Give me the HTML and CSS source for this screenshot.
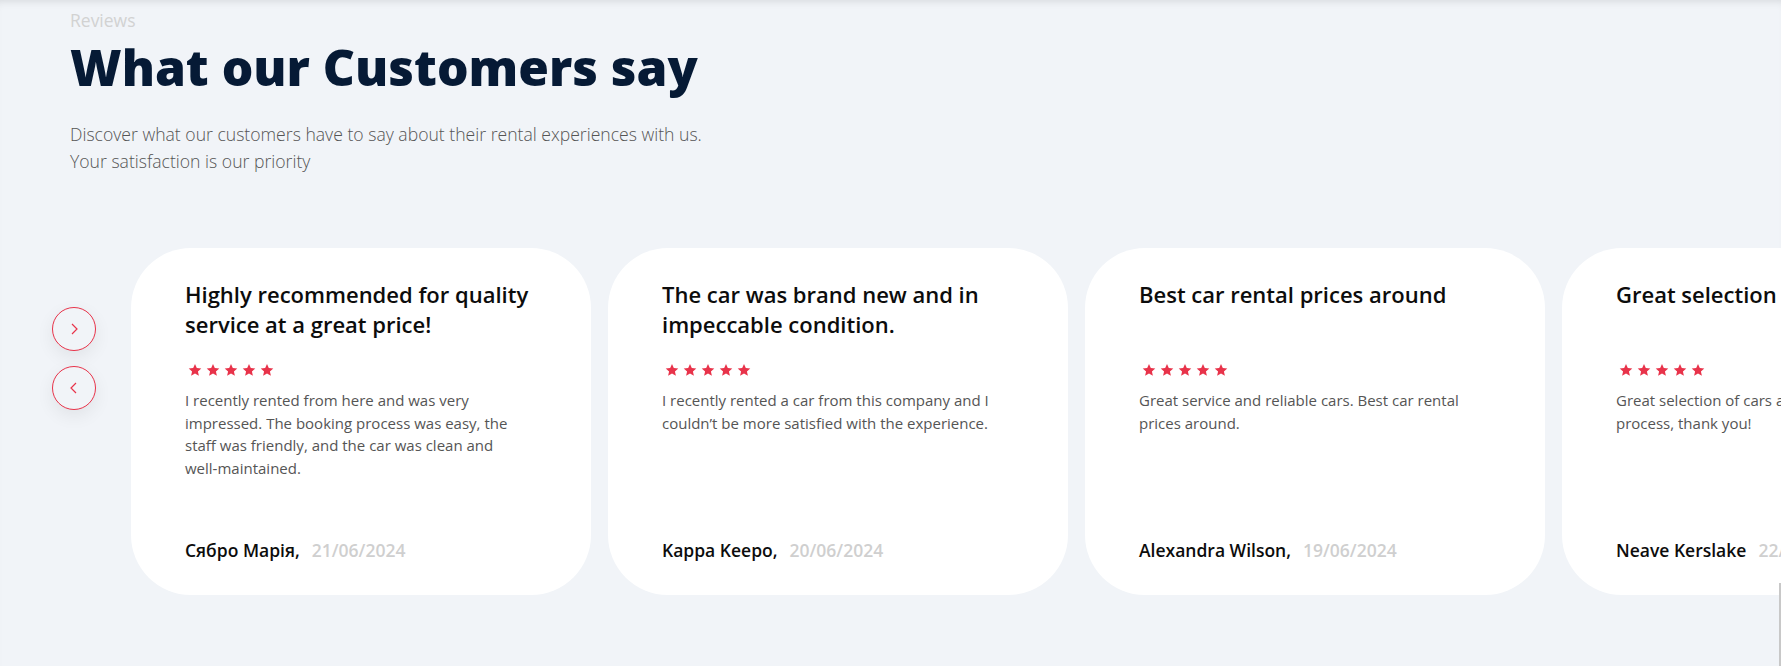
FILE: index.html
```html
<!DOCTYPE html>
<html lang="en">
<head>
<meta charset="utf-8">
<title>Reviews</title>
<link rel="stylesheet" href="styles.css">
</head>
<body>
<main class="page">
  <header class="intro">
    <div class="eyebrow">Reviews</div>
    <h1 class="title">What our Customers say</h1>
    <p class="lead">Discover what our customers have to say about their rental experiences with us.<br>Your satisfaction is our priority</p>
  </header>

  <section class="carousel">
    <div class="nav">
      <button class="nav-btn" aria-label="Next">
        <svg width="12" height="16" viewBox="0 0 12 16"><path d="M4 3 L9 8 L4 13" fill="none" stroke="#e8334a" stroke-width="1.2"/></svg>
      </button>
      <button class="nav-btn" aria-label="Previous">
        <svg width="12" height="16" viewBox="0 0 12 16"><path d="M8 3 L3 8 L8 13" fill="none" stroke="#e8334a" stroke-width="1.2"/></svg>
      </button>
    </div>

    <div class="track">
      <article class="card">
        <h3 class="card-title">Highly recommended for quality service at a great price!</h3>
        <div class="stars">
          <svg viewBox="0 0 24 24"><path d="M12 1.5l3.1 7.1 7.7.7-5.8 5.1 1.7 7.6L12 18l-6.7 4 1.7-7.6L1.2 9.3l7.7-.7z"/></svg>
          <svg viewBox="0 0 24 24"><path d="M12 1.5l3.1 7.1 7.7.7-5.8 5.1 1.7 7.6L12 18l-6.7 4 1.7-7.6L1.2 9.3l7.7-.7z"/></svg>
          <svg viewBox="0 0 24 24"><path d="M12 1.5l3.1 7.1 7.7.7-5.8 5.1 1.7 7.6L12 18l-6.7 4 1.7-7.6L1.2 9.3l7.7-.7z"/></svg>
          <svg viewBox="0 0 24 24"><path d="M12 1.5l3.1 7.1 7.7.7-5.8 5.1 1.7 7.6L12 18l-6.7 4 1.7-7.6L1.2 9.3l7.7-.7z"/></svg>
          <svg viewBox="0 0 24 24"><path d="M12 1.5l3.1 7.1 7.7.7-5.8 5.1 1.7 7.6L12 18l-6.7 4 1.7-7.6L1.2 9.3l7.7-.7z"/></svg>
        </div>
        <p class="card-text">I recently rented from here and was very impressed. The booking process was easy, the staff was friendly, and the car was clean and well&#8209;maintained.</p>
        <div class="author"><span class="name">Сябро Марія,</span><span class="date">21/06/2024</span></div>
      </article>

      <article class="card">
        <h3 class="card-title">The car was brand new and in impeccable condition.</h3>
        <div class="stars">
          <svg viewBox="0 0 24 24"><path d="M12 1.5l3.1 7.1 7.7.7-5.8 5.1 1.7 7.6L12 18l-6.7 4 1.7-7.6L1.2 9.3l7.7-.7z"/></svg>
          <svg viewBox="0 0 24 24"><path d="M12 1.5l3.1 7.1 7.7.7-5.8 5.1 1.7 7.6L12 18l-6.7 4 1.7-7.6L1.2 9.3l7.7-.7z"/></svg>
          <svg viewBox="0 0 24 24"><path d="M12 1.5l3.1 7.1 7.7.7-5.8 5.1 1.7 7.6L12 18l-6.7 4 1.7-7.6L1.2 9.3l7.7-.7z"/></svg>
          <svg viewBox="0 0 24 24"><path d="M12 1.5l3.1 7.1 7.7.7-5.8 5.1 1.7 7.6L12 18l-6.7 4 1.7-7.6L1.2 9.3l7.7-.7z"/></svg>
          <svg viewBox="0 0 24 24"><path d="M12 1.5l3.1 7.1 7.7.7-5.8 5.1 1.7 7.6L12 18l-6.7 4 1.7-7.6L1.2 9.3l7.7-.7z"/></svg>
        </div>
        <p class="card-text">I recently rented a car from this company and I couldn’t be more satisfied with the experience.</p>
        <div class="author"><span class="name">Kappa Keepo,</span><span class="date">20/06/2024</span></div>
      </article>

      <article class="card">
        <h3 class="card-title">Best car rental prices around</h3>
        <div class="stars">
          <svg viewBox="0 0 24 24"><path d="M12 1.5l3.1 7.1 7.7.7-5.8 5.1 1.7 7.6L12 18l-6.7 4 1.7-7.6L1.2 9.3l7.7-.7z"/></svg>
          <svg viewBox="0 0 24 24"><path d="M12 1.5l3.1 7.1 7.7.7-5.8 5.1 1.7 7.6L12 18l-6.7 4 1.7-7.6L1.2 9.3l7.7-.7z"/></svg>
          <svg viewBox="0 0 24 24"><path d="M12 1.5l3.1 7.1 7.7.7-5.8 5.1 1.7 7.6L12 18l-6.7 4 1.7-7.6L1.2 9.3l7.7-.7z"/></svg>
          <svg viewBox="0 0 24 24"><path d="M12 1.5l3.1 7.1 7.7.7-5.8 5.1 1.7 7.6L12 18l-6.7 4 1.7-7.6L1.2 9.3l7.7-.7z"/></svg>
          <svg viewBox="0 0 24 24"><path d="M12 1.5l3.1 7.1 7.7.7-5.8 5.1 1.7 7.6L12 18l-6.7 4 1.7-7.6L1.2 9.3l7.7-.7z"/></svg>
        </div>
        <p class="card-text">Great service and reliable cars. Best car rental prices around.</p>
        <div class="author"><span class="name">Alexandra Wilson,</span><span class="date">19/06/2024</span></div>
      </article>

      <article class="card">
        <h3 class="card-title">Great selection of cars</h3>
        <div class="stars">
          <svg viewBox="0 0 24 24"><path d="M12 1.5l3.1 7.1 7.7.7-5.8 5.1 1.7 7.6L12 18l-6.7 4 1.7-7.6L1.2 9.3l7.7-.7z"/></svg>
          <svg viewBox="0 0 24 24"><path d="M12 1.5l3.1 7.1 7.7.7-5.8 5.1 1.7 7.6L12 18l-6.7 4 1.7-7.6L1.2 9.3l7.7-.7z"/></svg>
          <svg viewBox="0 0 24 24"><path d="M12 1.5l3.1 7.1 7.7.7-5.8 5.1 1.7 7.6L12 18l-6.7 4 1.7-7.6L1.2 9.3l7.7-.7z"/></svg>
          <svg viewBox="0 0 24 24"><path d="M12 1.5l3.1 7.1 7.7.7-5.8 5.1 1.7 7.6L12 18l-6.7 4 1.7-7.6L1.2 9.3l7.7-.7z"/></svg>
          <svg viewBox="0 0 24 24"><path d="M12 1.5l3.1 7.1 7.7.7-5.8 5.1 1.7 7.6L12 18l-6.7 4 1.7-7.6L1.2 9.3l7.7-.7z"/></svg>
        </div>
        <p class="card-text">Great selection of cars and a very easy rental process, thank you!</p>
        <div class="author"><span class="name">Neave Kerslake</span><span class="date">22/06/2024</span></div>
      </article>
    </div>
  </section>
  <div class="scroll-thumb"></div>
</main>
</body>
</html>
```

FILE: styles.css
```css
* { box-sizing: border-box; }

html, body {
  margin: 0;
  padding: 0;
  height: 100%;
  overflow: hidden;
}

body {
  background: #f1f4f8;
  font-family: "Open Sans", "Noto Sans", "Liberation Sans", sans-serif;
  color: #111;
}

.page {
  position: relative;
  min-height: 666px;
  box-shadow: inset 0 7px 8px -6px rgba(0, 0, 0, 0.12);
  padding-top: 8px;
}

.intro {
  padding-left: 70px;
}

.eyebrow {
  font-size: 17.5px;
  line-height: 24px;
  color: #d2d2d2;
  font-weight: 400;
}

.title {
  margin: 5px 0 0;
  font-size: 49.7px;
  line-height: 60px;
  font-weight: 800;
  color: #061a35;
}

.lead {
  margin: 24px 0 0;
  font-size: 17.6px;
  line-height: 27px;
  font-weight: 300;
  color: #555;
}

.carousel {
  display: flex;
  align-items: flex-start;
  gap: 35px;
  margin-top: 73px;
  padding-left: 52px;
}

.nav {
  display: flex;
  flex-direction: column;
  gap: 15px;
  margin-top: 59px;
  flex: 0 0 auto;
}

.nav-btn {
  width: 44px;
  height: 44px;
  border-radius: 50%;
  border: 1.5px solid #e8334a;
  background: #f1f4f8;
  display: flex;
  align-items: center;
  justify-content: center;
  padding: 0;
  box-shadow: 0 6px 18px rgba(0, 0, 0, 0.07);
  cursor: pointer;
}

.track {
  display: flex;
  gap: 17px;
  flex: 0 0 auto;
}

.card {
  width: 460px;
  height: 347px;
  flex: 0 0 460px;
  background: #fff;
  border-radius: 60px;
  padding: 31px 50px 33px 54px;
  display: flex;
  flex-direction: column;
}

.card-title {
  margin: 0;
  font-size: 22px;
  line-height: 30px;
  font-weight: 600;
  color: #0c0c0c;
  min-height: 60px;
}

.stars {
  display: flex;
  gap: 4px;
  margin-top: 24px;
  margin-left: 3px;
}

.stars svg {
  width: 14px;
  height: 14px;
  fill: #e8334a;
}

.card-text {
  margin: 12px 0 0;
  max-width: 338px;
  font-size: 15px;
  line-height: 22.7px;
  color: #555;
  font-weight: 400;
}

.author {
  margin-top: auto;
  display: flex;
  align-items: baseline;
  gap: 12px;
  font-size: 17.5px;
  line-height: 24px;
  font-weight: 600;
  white-space: nowrap;
}

.name { color: #0c0c0c; }
.date { color: #cfcfcf; }

.scroll-thumb {
  position: absolute;
  right: 0;
  top: 583px;
  width: 2px;
  height: 83px;
  background: #c8c8c8;
}
```
